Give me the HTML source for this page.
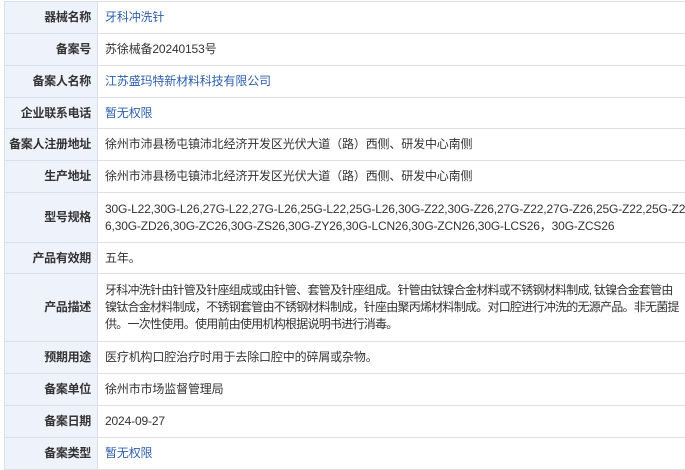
<!DOCTYPE html>
<html><head><meta charset="utf-8"><style>
html,body{margin:0;padding:0;background:#fff;width:685px;height:469px;overflow:hidden}
table{position:absolute;left:4px;top:1px;border-collapse:collapse;width:686px;table-layout:fixed;font-family:"Liberation Sans","Noto Sans CJK SC",sans-serif;font-size:12px;color:#333}
td{border:1px solid #dcdfe6;padding:0 2px 0 7px;line-height:17px;word-break:break-all;letter-spacing:-0.15px;overflow:hidden}
td.l{width:86px;background:#eef2fa;text-align:right;font-weight:bold;padding:0 6px 0 0;color:#333;letter-spacing:-0.3px}
td.n{white-space:nowrap;letter-spacing:-0.75px}
a{color:#2d5faa;text-decoration:none}
</style></head><body>
<table>
<tr style="height:32px"><td class="l">器械名称</td><td><a>牙科冲洗针</a></td></tr>
<tr style="height:32px"><td class="l">备案号</td><td>苏徐械备20240153号</td></tr>
<tr style="height:32px"><td class="l">备案人名称</td><td><a>江苏盛玛特新材料科技有限公司</a></td></tr>
<tr style="height:31px"><td class="l">企业联系电话</td><td><a>暂无权限</a></td></tr>
<tr style="height:32px"><td class="l">备案人注册地址</td><td>徐州市沛县杨屯镇沛北经济开发区光伏大道（路）西侧、研发中心南侧</td></tr>
<tr style="height:32px"><td class="l">生产地址</td><td>徐州市沛县杨屯镇沛北经济开发区光伏大道（路）西侧、研发中心南侧</td></tr>
<tr style="height:50px"><td class="l">型号规格</td><td style="white-space:nowrap">30G-L22,30G-L26,27G-L22,27G-L26,25G-L22,25G-L26,30G-Z22,30G-Z26,27G-Z22,27G-Z26,25G-Z22,25G-Z2<br>6,30G-ZD26,30G-ZC26,30G-ZS26,30G-ZY26,30G-LCN26,30G-ZCN26,30G-LCS26，30G-ZCS26</td></tr>
<tr style="height:31px"><td class="l">产品有效期</td><td>五年。</td></tr>
<tr style="height:68px"><td class="l">产品描述</td><td class="n">牙科冲洗针由针管及针座组成或由针管、套管及针座组成。针管由钛镍合金材料或不锈钢材料制成, 钛镍合金套管由<br>镍钛合金材料制成，不锈钢套管由不锈钢材料制成，针座由聚丙烯材料制成。对口腔进行冲洗的无源产品。非无菌提<br>供。一次性使用。使用前由使用机构根据说明书进行消毒。</td></tr>
<tr style="height:32px"><td class="l">预期用途</td><td>医疗机构口腔治疗时用于去除口腔中的碎屑或杂物。</td></tr>
<tr style="height:32px"><td class="l">备案单位</td><td>徐州市市场监督管理局</td></tr>
<tr style="height:32px"><td class="l">备案日期</td><td>2024-09-27</td></tr>
<tr style="height:32px"><td class="l">备案类型</td><td><a>暂无权限</a></td></tr>
</table>
</body></html>
